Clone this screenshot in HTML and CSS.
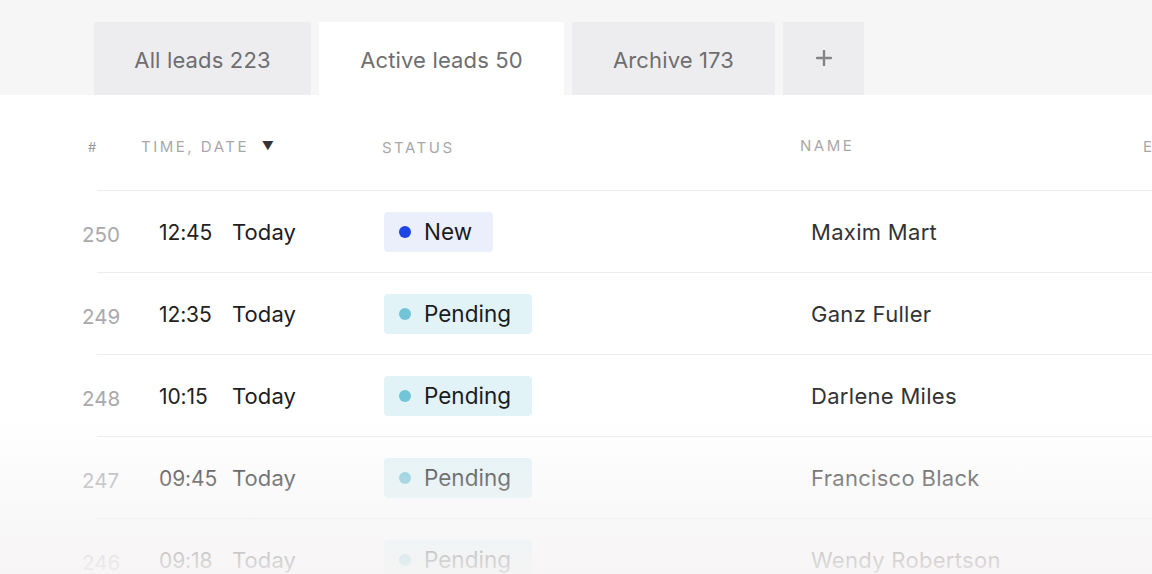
FILE: index.html
```html
<!DOCTYPE html>
<html lang="en">
<head>
<meta charset="utf-8">
<title>Leads</title>
<link rel="stylesheet" href="styles.css">
</head>
<body>
<div class="page">
  <nav class="tabs">
    <button class="tab tab--all">All leads 223</button>
    <button class="tab tab--active is-current">Active leads 50</button>
    <button class="tab tab--archive">Archive 173</button>
    <button class="tab tab--add" aria-label="Add view">
      <svg width="16" height="16" viewBox="0 0 16 16" aria-hidden="true">
        <path d="M8 1v14M1 8h14" stroke="#858587" stroke-width="2.4" stroke-linecap="round"/>
      </svg>
    </button>
  </nav>

  <section class="board">
    <div class="thead">
      <span class="th th--num">#</span>
      <span class="th th--time">TIME, DATE <span class="sort">&#9660;</span></span>
      <span class="th th--status">STATUS</span>
      <span class="th th--name">NAME</span>
      <span class="th th--email">EMAIL</span>
    </div>

    <div class="row">
      <span class="cell-num">250</span>
      <span class="cell-time">12:45</span>
      <span class="cell-date">Today</span>
      <span class="cell-status"><span class="badge badge--new"><i class="dot"></i>New</span></span>
      <span class="cell-name">Maxim Mart</span>
    </div>
    <div class="row">
      <span class="cell-num">249</span>
      <span class="cell-time">12:35</span>
      <span class="cell-date">Today</span>
      <span class="cell-status"><span class="badge badge--pending"><i class="dot"></i>Pending</span></span>
      <span class="cell-name">Ganz Fuller</span>
    </div>
    <div class="row">
      <span class="cell-num">248</span>
      <span class="cell-time">10:15</span>
      <span class="cell-date">Today</span>
      <span class="cell-status"><span class="badge badge--pending"><i class="dot"></i>Pending</span></span>
      <span class="cell-name">Darlene Miles</span>
    </div>
    <div class="row">
      <span class="cell-num">247</span>
      <span class="cell-time">09:45</span>
      <span class="cell-date">Today</span>
      <span class="cell-status"><span class="badge badge--pending"><i class="dot"></i>Pending</span></span>
      <span class="cell-name">Francisco Black</span>
    </div>
    <div class="row">
      <span class="cell-num">246</span>
      <span class="cell-time">09:18</span>
      <span class="cell-date">Today</span>
      <span class="cell-status"><span class="badge badge--pending"><i class="dot"></i>Pending</span></span>
      <span class="cell-name">Wendy Robertson</span>
    </div>

    <div class="fade"></div>
  </section>
</div>
</body>
</html>
```

FILE: styles.css
```css
* {
  box-sizing: border-box;
}

html, body {
  margin: 0;
  padding: 0;
}

body {
  width: 1152px;
  height: 574px;
  overflow: hidden;
  background: #ffffff;
  font-family: "Inter", "Noto Sans", sans-serif;
  color: #222;
}

.page {
  display: flex;
  flex-direction: column;
  height: 100%;
}

/* ---- tab strip ---- */
.tabs {
  display: flex;
  gap: 8px;
  padding: 22px 0 0 94px;
  background: #f6f6f7;
  height: 95px;
}

.tab {
  display: flex;
  align-items: center;
  justify-content: center;
  height: 73px;
  border: 0;
  margin: 0;
  padding: 2px 0 0;
  background: #ededef;
  color: #6e6e70;
  font-family: inherit;
  font-size: 22px;
  font-weight: 400;
  letter-spacing: 0.15px;
}

.tab.is-current {
  background: #ffffff;
}

.tab--all { width: 217px; }
.tab--active { width: 245px; }
.tab--archive { width: 203px; }
.tab--add {
  width: 81px;
  padding: 0 0 2px;
}

/* ---- table ---- */
.board {
  position: relative;
  flex: 1;
  background: #ffffff;
}

.thead {
  position: relative;
  height: 96px;
  margin-left: 97px;
  border-bottom: 1px solid #ececee;
}

.th {
  position: absolute;
  top: 44px;
  font-size: 15px;
  letter-spacing: 2.5px;
  color: #a8a8aa;
  line-height: 1;
  white-space: nowrap;
}

.th--num { left: -9px; font-size: 13px; letter-spacing: 0; top: 46px; color: #9c9c9e; }
.th--time { left: 44px; }
.th--status { left: 285px; top: 45px; }
.th--name { left: 703px; top: 43px; }
.th--email { left: 1046px; }

.sort {
  color: #333;
  font-size: 12px;
  letter-spacing: 0;
  margin-left: 6px;
  position: relative;
  top: -2px;
}

.row {
  display: grid;
  grid-template-columns: 62px 73px 152px 427px 1fr;
  align-items: center;
  height: 82px;
  margin-left: 97px;
  border-bottom: 1px solid #ececee;
  white-space: nowrap;
}

.cell-num {
  margin-left: -15px;
  font-size: 20.5px;
  color: #a9a9ab;
  padding-top: 5px;
}

.cell-time {
  font-size: 21px;
  color: #222;
  letter-spacing: -0.1px;
  padding-top: 1px;
}

.cell-date {
  font-size: 22px;
  color: #1d1d1f;
  letter-spacing: 0.1px;
}

.cell-status {
  display: flex;
}

.cell-name {
  font-size: 22px;
  letter-spacing: 0.3px;
  color: #333335;
}

.badge {
  display: inline-flex;
  align-items: center;
  gap: 13px;
  height: 40px;
  padding: 0 21px 0 15px;
  border-radius: 4px;
  font-size: 22.5px;
  color: #1b1b1d;
}

.badge .dot {
  width: 12px;
  height: 12px;
  border-radius: 50%;
  flex: none;
}

.badge--new { background: #ebeffc; }
.badge--new .dot { background: #1d44e4; }

.badge--pending { background: #e1f3f6; }
.badge--pending .dot { background: #72c4d6; }

/* soft fade over the lower rows */
.fade {
  position: absolute;
  left: 0;
  right: 0;
  bottom: 0;
  height: 184px;
  pointer-events: none;
  background: linear-gradient(to bottom,
    rgba(246, 244, 244, 0) 0%,
    rgba(246, 244, 244, 0.5) 42%,
    rgba(246, 244, 244, 0.9) 85%,
    rgba(246, 244, 244, 0.96) 100%);
}
```
